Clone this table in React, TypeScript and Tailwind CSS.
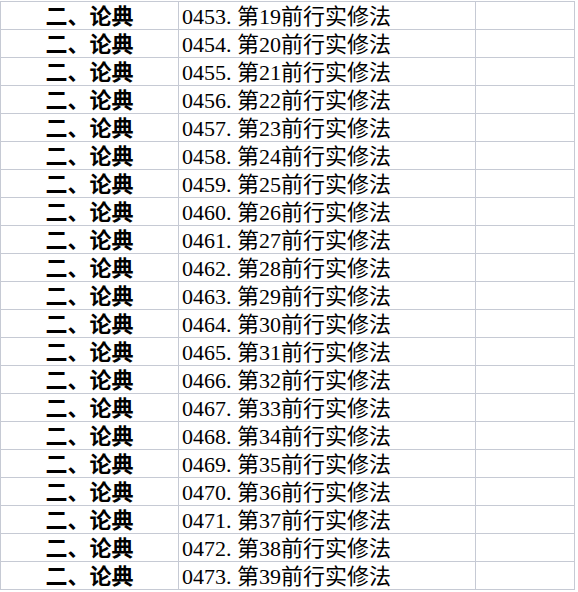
import React from "react";

const rows = Array.from({ length: 21 }, (_, i) => ({
  id: String(453 + i).padStart(4, "0"),
  n: 19 + i,
}));

const font = { fontFamily: '"Liberation Serif", "Noto Sans CJK SC", serif' };

export default function App() {
  return (
    <div className="w-[578px] h-[592px] bg-white overflow-hidden">
      <div className="mt-px w-[575px] border-l border-t border-[#c6cad4]">
        {rows.map((r) => (
          <div key={r.id} className="flex h-[28px]">
            <div
              className="w-[178px] h-[28px] pt-[3px] border-r border-b border-[#c6cad4] flex items-center justify-center text-[22px] font-bold text-black leading-[24px] whitespace-nowrap"
              style={font}
            >
              二、论典
            </div>
            <div
              className="w-[297px] h-[28px] pt-[3px] border-r border-b border-[#c6cad4] flex items-center pl-[3px] text-[22px] text-black leading-[24px] whitespace-nowrap"
              style={font}
            >
              <span>{r.id}</span>
              <span className="inline-block w-[11px]">.</span>
              <span>第{r.n}前行实修法</span>
            </div>
            <div className="w-[99px] h-[28px] border-r border-b border-[#c6cad4]" />
          </div>
        ))}
      </div>
    </div>
  );
}
